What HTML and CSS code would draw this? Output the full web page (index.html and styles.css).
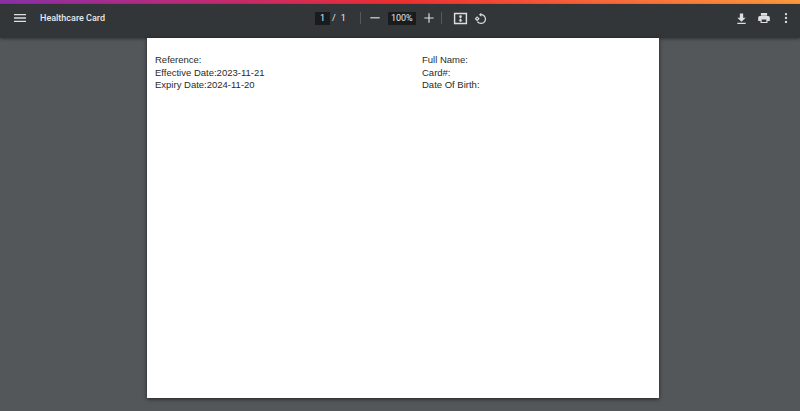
FILE: index.html
```html
<!DOCTYPE html>
<html lang="en">
<head>
    <meta charset="UTF-8">
    <meta name="viewport" content="width=device-width, initial-scale=1.0">
    <title>Healthcare Card</title>
    <link rel="stylesheet" href="styles.css">
</head>
<body>
    <div class="accent-bar"></div>

    <header class="toolbar">
        <div class="toolbar-left">
            <svg class="icon" width="16" height="16" viewBox="0 0 24 24"><path d="M3 18h18v-2H3v2zm0-5h18v-2H3v2zm0-7v2h18V6H3z"/></svg>
            <span class="doc-title">Healthcare Card</span>
        </div>

        <div class="toolbar-center">
            <span class="field page-field">1</span>
            <span class="page-sep">/</span>
            <span class="page-total">1</span>
            <span class="divider divider-first"></span>
            <svg class="icon zoom-out" width="14" height="14" viewBox="0 0 18 18"><path d="M3 8h12v1.500H3z"/></svg>
            <span class="field zoom-field">100%</span>
            <svg class="icon zoom-in" width="14" height="14" viewBox="0 0 18 18"><path d="M8.250 3h1.500v5.250H15v1.500H9.750V15h-1.500V9.750H3v-1.500h5.250z"/></svg>
            <span class="divider divider-second"></span>
            <svg class="icon fit" width="17" height="17" viewBox="0 0 18 18"><path d="M2 3h14v12H2V3zm1.500 1.500v9h11v-9h-11z"/><path d="M8 5.500h2v1.500l1 0-2 2-2-2 1 0zM9 9l2 2-1 0v1.500H8V11l-1 0z"/></svg>
            <svg class="icon rotate" width="15" height="15" viewBox="0 0 18 18"><path d="M10 2.200v1.500a6 6 0 1 1-5.200 9.500l1.200-.9A4.500 4.500 0 1 0 10 5.200v1.600L7.200 4.500z"/><path d="M5 6.200l3 3-3 3-3-3zm0 1.900L3.900 9.200 5 10.300l1.100-1.100z"/></svg>
        </div>

        <div class="toolbar-right">
            <svg class="icon" width="15" height="15" viewBox="0 0 18 18"><path d="M7 3h4v5h3l-5 5-5-5h3zM4 14h10v1.500H4z"/></svg>
            <svg class="icon" width="14" height="14" viewBox="0 0 18 18"><path d="M5 2.500h8V6H5zM3.500 6.500h11A2 2 0 0 1 16.500 8.500V13H13.500v2.500h-9V13H1.500V8.500A2 2 0 0 1 3.500 6.500zM6 11v3h6v-3z"/></svg>
            <svg class="icon" width="14" height="14" viewBox="0 0 18 18"><circle cx="9" cy="4" r="1.500"/><circle cx="9" cy="9" r="1.500"/><circle cx="9" cy="14" r="1.500"/></svg>
        </div>
    </header>

    <main class="viewer">
        <div class="sheet">
            <div class="card-col">
                <p>Reference:</p>
                <p>Effective Date:2023-11-21</p>
                <p>Expiry Date:2024-11-20</p>
            </div>
            <div class="card-col">
                <p>Full Name:</p>
                <p>Card#:</p>
                <p>Date Of Birth:</p>
            </div>
        </div>
    </main>
</body>
</html>
```

FILE: styles.css
```css
html, body {
    height: 100%;
}

body {
    display: flex;
    flex-direction: column;
    margin: 0;
    overflow: hidden;
    background: #53575a;
    font-family: 'Roboto', 'Liberation Sans', sans-serif;
}

.accent-bar {
    height: 4px;
    background: linear-gradient(90deg, #8a30a8 0%, #c42a70 28%, #ee2f30 50%, #f8603a 72%, #fb9a3c 100%);
}

.toolbar {
    display: flex;
    align-items: center;
    justify-content: space-between;
    box-sizing: border-box;
    height: 34px;
    padding-bottom: 6px;
    background: #323639;
    color: #e8eaeb;
    box-shadow: 0 1px 3px rgba(0, 0, 0, 0.4);
}

.icon {
    display: block;
    flex: none;
    fill: #dcdedf;
}

.toolbar-left {
    display: flex;
    align-items: center;
    width: 315px;
    padding-left: 12px;
    box-sizing: border-box;
}

.doc-title {
    margin-left: 12px;
    font-size: 9px;
    font-weight: 500;
}

.toolbar-center {
    display: flex;
    align-items: center;
    flex: 1;
    font-size: 9px;
}

.field {
    display: flex;
    align-items: center;
    justify-content: center;
    height: 13px;
    background: #191b1c;
}

.page-field {
    width: 15px;
}

.page-sep {
    margin-left: 2px;
}

.page-total {
    margin-left: 5px;
}

.divider {
    width: 1px;
    height: 12px;
    background: #55595c;
}

.divider-first {
    margin-left: 14px;
}

.zoom-out {
    margin-left: 7px;
}

.zoom-field {
    width: 28px;
    margin-left: 6px;
}

.zoom-in {
    margin-left: 6px;
}

.divider-second {
    margin-left: 5px;
}

.fit {
    margin-left: 10px;
}

.rotate {
    margin-left: 4px;
}

.toolbar-right {
    display: flex;
    align-items: center;
    gap: 8px;
    padding-right: 7px;
}

.viewer {
    flex: 1;
    display: flex;
    justify-content: center;
    padding-left: 6px;
}

.sheet {
    display: grid;
    grid-template-columns: 267px 1fr;
    align-content: start;
    box-sizing: border-box;
    width: 512px;
    height: 360px;
    padding: 16px 8px;
    background: #fff;
    box-shadow: 0 1px 4px rgba(0, 0, 0, 0.6);
    font-family: 'Liberation Sans', Arial, sans-serif;
    font-size: 9.500px;
    line-height: 12.500px;
    color: #2a2a2a;
}

.card-col p {
    margin: 0;
}
```
